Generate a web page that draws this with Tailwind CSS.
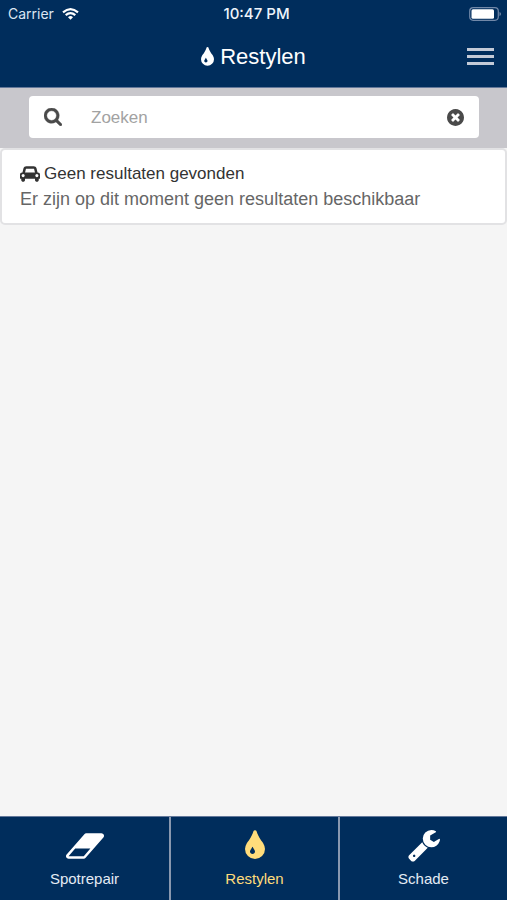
<!DOCTYPE html>
<html lang="nl">
<head>
<meta charset="utf-8">
<meta name="viewport" content="width=device-width, initial-scale=1">
<title>Restylen</title>
<script src="https://cdn.jsdelivr.net/npm/@tailwindcss/browser@4"></script>
</head>
<body class="flex min-h-screen flex-col bg-[#f5f5f5] font-['Liberation_Sans',Arial,sans-serif]">
<header class="border-b border-[#63789a] bg-[#002d5c] text-white">
  <div class="grid h-7 grid-cols-[1fr_auto_1fr] items-center pl-2 pr-[6px] font-['Inter',sans-serif] text-[14px] leading-7">
    <div class="flex items-center gap-2 text-[#dce6f2]">
      <span>Carrier</span>
      <svg class="h-3 w-[17px]" viewBox="0 0 17 12" fill="none" stroke="#fff" stroke-width="2.2" aria-hidden="true"><path d="M1 4.4Q8.500-2 16 4.400M3.700 7.200Q8.500 3.100 13.300 7.200"/><path d="M6 9.200Q8.500 7 11 9.200L8.500 11.800Z" fill="#fff" stroke="none"/></svg>
    </div>
    <span class="pl-1 text-center text-[15px] font-medium text-[#eef4fb]">10:47 PM</span>
    <svg class="h-[14px] w-8 justify-self-end" viewBox="0 0 32 14" aria-hidden="true"><rect x=".7" y=".7" width="28.600" height="12.600" rx="3.500" fill="none" stroke="#7188a8" stroke-width="1.200"/><rect x="2.500" y="2.300" width="22.500" height="9.400" rx="1.500" fill="#fff"/><path d="M30.500 5v4q1.500-.6 1.500-2t-1.500-2Z" fill="#7188a8"/></svg>
  </div>
  <div class="grid h-[59px] grid-cols-[1fr_auto_1fr] items-center px-[13px] pb-[2px]">
    <h1 class="col-start-2 flex items-center gap-[6px] text-[22px] leading-7">
      <svg class="mb-[2px] h-5 w-[13px]" viewBox="384 0 1024 1536" fill="currentColor" aria-hidden="true"><path d="M896 1152q0-36-20-69-1-1-15.500-22.500t-25.500-38-25-44-21-50.500q-4-16-21-16t-21 16q-7 23-21 50.500t-25 44-25.500 38-15.500 22.500q-20 33-20 69 0 53 37.500 90.500t90.500 37.500 90.500-37.500 37.500-90.500zm512-128q0 212-150 362t-362 150-362-150-150-362q0-145 81-275 6-9 62.500-90.500t101-151 99.500-178 83-201.500q9-30 34-47t51-17 51.500 17 33.500 47q28 93 83 201.500t99.500 178 101 151 62.500 90.500q81 127 81 275z"/></svg>
      Restylen
    </h1>
    <button type="button" aria-label="Menu" class="flex flex-col gap-1 justify-self-end">
      <span class="h-[3px] w-[27px] bg-[#c3cad7]"></span>
      <span class="h-[3px] w-[27px] bg-[#c3cad7]"></span>
      <span class="h-[3px] w-[27px] bg-[#c3cad7]"></span>
    </button>
  </div>
</header>
<main class="grow">
  <form role="search" class="bg-[#c8c7cc] px-7 pt-2 pb-[10px]">
    <div class="ml-px flex h-[42px] items-center rounded bg-white px-[15px]">
      <label for="zoek" aria-label="Zoeken"><svg class="h-[18px] w-[18px]" viewBox="64 128 1664 1664" fill="#4a4a4a" stroke="#4a4a4a" stroke-width="40" aria-hidden="true"><path d="M1216 832q0-185-131.500-316.500t-316.500-131.500-316.500 131.500-131.500 316.500 131.500 316.500 316.500 131.500 316.500-131.500 131.500-316.500zm512 832q0 52-38 90t-90 38q-54 0-90-38l-343-342q-179 124-399 124-143 0-273.500-55.500t-225-150-150-225-55.500-273.500 55.500-273.500 150-225 225-150 273.500-55.500 273.500 55.500 225 150 150 225 55.500 273.500q0 220-124 399l343 343q37 37 37 90z"/></svg></label>
      <input id="zoek" type="text" placeholder="Zoeken" class="ml-7 min-w-0 grow pt-[2px] pl-px text-[17px] leading-6 text-[#444] outline-none placeholder:text-[#a2a2a2]">
      <button type="reset" aria-label="Wissen"><svg class="h-[17px] w-[17px]" viewBox="128 128 1536 1536" fill="#4a4a4a" aria-hidden="true"><path d="M1277 1122q0-26-19-45l-181-181 181-181q19-19 19-45 0-27-19-46l-90-90q-19-19-46-19-26 0-45 19l-181 181-181-181q-19-19-45-19-27 0-46 19l-90 90q-19 19-19 46 0 26 19 45l181 181-181 181q-19 19-19 45 0 27 19 46l90 90q19 19 46 19 26 0 45-19l181-181 181 181q19 19 45 19 27 0 46-19l90-90q19-19 19-46zm387-226q0 209-103 385.500t-279.500 279.500-385.500 103-385.500-103-279.500-279.500-103-385.500 103-385.500 279.500-279.500 385.500-103 385.500 103 279.500 279.500 103 385.500z"/></svg></button>
    </div>
  </form>
  <section class="rounded-[5px] border-2 border-[#e2e2e4] bg-white px-[18px] pt-3 pb-[11px]">
    <h2 class="flex items-center gap-1 text-[17px] leading-6 text-[#333]">
      <svg class="h-4 w-5" viewBox="0 128 2048 1600" fill="#333" aria-hidden="true"><path d="M480 1088q0-66-47-113t-113-47-113 47-47 113 47 113 113 47 113-47 47-113zm36-320h1016l-89-357q-2-8-14-17.500t-21-9.500h-768q-9 0-21 9.500t-14 17.500zm1372 320q0-66-47-113t-113-47-113 47-47 113 47 113 113 47 113-47 47-113zm160-96v384q0 14-9 23t-23 9h-96v128q0 80-56 136t-136 56-136-56-56-136v-128h-1024v128q0 80-56 136t-136 56-136-56-56-136v-128h-96q-14 0-23-9t-9-23v-384q0-93 65.500-158.500t158.500-65.500h28l105-419q23-94 104-157.500t179-63.500h768q98 0 179 63.500t104 157.500l105 419h28q93 0 158.500 65.500t65.500 158.500z"/></svg>
      Geen resultaten gevonden
    </h2>
    <p class="text-[18px] leading-[26px] text-[#666]">Er zijn op dit moment geen resultaten beschikbaar</p>
  </section>
</main>
<nav class="grid grid-cols-3 border-t border-[#63789a] bg-[#002d5c] text-[15px] leading-5 text-[#e4ebf4]">
  <a href="#spotrepair" class="flex h-[83px] flex-col items-center pt-3">
    <span class="flex h-10 items-start pt-1"><svg class="h-[26px] w-[38px]" viewBox="64 256 1920 1280" fill="#fff" aria-hidden="true"><path d="M960 1408l336-384h-768l-336 384h768zm1013-1077q15 34 9.500 71.500t-30.500 65.500l-896 1024q-38 44-96 44h-768q-38 0-69.500-20.500t-47.500-54.500q-15-34-9.500-71.500t30.500-65.500l896-1024q38-44 96-44h768q38 0 69.500 20.500t47.500 54.500z"/></svg></span>
    Spotrepair
  </a>
  <a href="#restylen" aria-current="page" class="flex h-[83px] flex-col items-center border-l-2 border-[#8998af] pt-3 text-[#ffdc7b]">
    <span class="flex h-10 items-start"><svg class="h-[30px] w-5" viewBox="384 0 1024 1536" fill="currentColor" aria-hidden="true"><path d="M896 1152q0-36-20-69-1-1-15.500-22.500t-25.500-38-25-44-21-50.500q-4-16-21-16t-21 16q-7 23-21 50.500t-25 44-25.500 38-15.500 22.500q-20 33-20 69 0 53 37.500 90.500t90.500 37.500 90.500-37.500 37.500-90.500zm512-128q0 212-150 362t-362 150-362-150-150-362q0-145 81-275 6-9 62.500-90.500t101-151 99.500-178 83-201.500q9-30 34-47t51-17 51.500 17 33.500 47q28 93 83 201.500t99.500 178 101 151 62.500 90.500q81 127 81 275z"/></svg></span>
    Restylen
  </a>
  <a href="#schade" class="flex h-[83px] flex-col items-center border-l-2 border-[#8998af] pt-3">
    <span class="flex h-10 items-start pt-px"><svg class="h-8 w-8" viewBox="64 128 1664 1664" fill="#fff" aria-hidden="true"><path d="M448 1472q0-26-19-45t-45-19-45 19-19 45 19 45 45 19 45-19 19-45zm644-420l-682 682q-37 37-90 37-52 0-91-37l-106-108q-38-36-38-90 0-53 38-91l681-681q39 98 114.500 173.500t173.500 114.500zm634-435q0 39-23 106-47 134-164.500 217.500t-258.500 83.500q-185 0-316.500-131.500t-131.500-316.500 131.500-316.500 316.500-131.500q58 0 121.500 16.500t107.500 46.500q16 11 16 28t-16 28l-293 169v224l193 107q5-3 79-48.500t135.500-81 70.500-35.500q15 0 23.500 10t8.500 25z"/></svg></span>
    Schade
  </a>
</nav>
</body>
</html>
